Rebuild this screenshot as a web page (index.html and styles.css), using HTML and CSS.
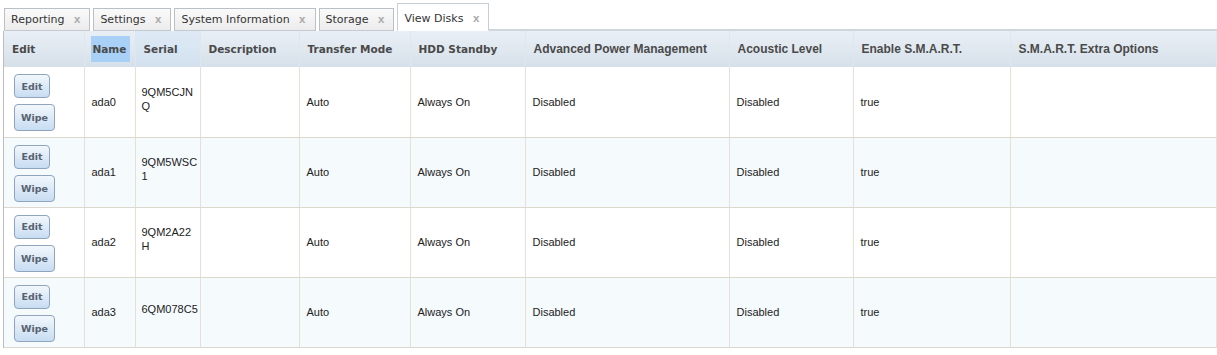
FILE: index.html
```html
<!DOCTYPE html>
<html lang="en">
<head>
    <meta charset="UTF-8">
    <title>View Disks</title>
    <link rel="stylesheet" href="styles.css">
</head>
<body>
    <!-- Tab strip -->
    <div class="tab-bar">
        <div class="tab">Reporting <span class="tab-close">x</span></div>
        <div class="tab">Settings <span class="tab-close">x</span></div>
        <div class="tab">System Information <span class="tab-close">x</span></div>
        <div class="tab">Storage <span class="tab-close">x</span></div>
        <div class="tab active">View Disks <span class="tab-close">x</span></div>
        <div class="tab-fill"></div>
    </div>

    <div class="grid-wrap">
        <table class="disk-grid">
            <colgroup>
                <col style="width:80px">
                <col style="width:51px">
                <col style="width:65px">
                <col style="width:99px">
                <col style="width:111px">
                <col style="width:115px">
                <col style="width:204px">
                <col style="width:124px">
                <col style="width:157px">
                <col>
            </colgroup>
            <thead>
                <tr>
                    <th class="th-plain">Edit</th>
                    <th class="th-plain sorted"><span>Name</span></th>
                    <th class="th-plain hover">Serial</th>
                    <th class="th-plain">Description</th>
                    <th class="th-plain">Transfer Mode</th>
                    <th class="th-plain">HDD Standby</th>
                    <th class="th-narrow">Advanced Power Management</th>
                    <th class="th-narrow">Acoustic Level</th>
                    <th class="th-narrow">Enable S.M.A.R.T.</th>
                    <th class="th-narrow">S.M.A.R.T. Extra Options</th>
                </tr>
            </thead>
            <tbody id="diskRows"></tbody>
        </table>
    </div>

    <script>
        // Disk data
        const disks = [
            { name: 'ada0', serial: '9QM5CJNQ' },
            { name: 'ada1', serial: '9QM5WSC1' },
            { name: 'ada2', serial: '9QM2A22H' },
            { name: 'ada3', serial: '6QM078C5' }
        ];

        const tbody = document.getElementById('diskRows');

        disks.forEach(function(d, i) {
            const tr = document.createElement('tr');
            if (i % 2 === 1) tr.className = 'alt';
            tr.innerHTML =
                '<td class="btn-cell"><button class="grid-btn">Edit</button><button class="grid-btn wide">Wipe</button></td>' +
                '<td>' + d.name + '</td>' +
                '<td class="serial">' + d.serial + '</td>' +
                '<td></td>' +
                '<td>Auto</td>' +
                '<td>Always On</td>' +
                '<td>Disabled</td>' +
                '<td>Disabled</td>' +
                '<td>true</td>' +
                '<td></td>';
            tbody.appendChild(tr);
        });
    </script>
</body>
</html>
```

FILE: styles.css
```css
* {
    margin: 0;
    padding: 0;
    box-sizing: border-box;
}

body {
    font-family: 'Liberation Sans', Arial, sans-serif;
    font-size: 11px;
    color: #222;
    background: #fff;
    padding-top: 3px;
}

/* Tabs */
.tab-bar {
    display: flex;
    align-items: flex-end;
    height: 28px;
    padding-left: 4px;
}

.tab {
    font-family: 'DejaVu Sans', Verdana, sans-serif;
    font-size: 11px;
    color: #333;
    height: 23px;
    line-height: 21px;
    padding: 0 9px 0 6px;
    margin-right: 3px;
    border: 1px solid #b9c0c8;
    border-bottom-color: #c3cad2;
    background: linear-gradient(#fafafa, #ececec);
    white-space: nowrap;
}

.tab.active {
    height: 28px;
    line-height: 28px;
    background: #fff;
    border-color: #c6ced8;
    border-bottom-color: #fff;
    margin-right: 0;
}

.tab-close {
    font-family: 'Liberation Sans', Arial, sans-serif;
    font-weight: bold;
    color: #a9a9a9;
    margin-left: 6px;
    font-size: 11.5px;
}

.tab-fill {
    flex: 1;
    border-bottom: 2px solid #d0d6dd;
    height: 2px;
}

/* Grid */
.grid-wrap {
    margin-left: 3px;
    border-left: 1px solid #bdbdbd;
}

.disk-grid {
    width: 100%;
    table-layout: fixed;
    border-collapse: collapse;
}

.disk-grid th {
    height: 36px;
    text-align: left;
    font-weight: bold;
    color: #4a4a4a;
    padding: 0 8px;
    background: linear-gradient(#e9eff5, #d6e0ea);
    border-right: 1px solid #dfe6ee;
    white-space: nowrap;
    overflow: hidden;
}

.disk-grid th.th-plain {
    font-family: 'DejaVu Sans', Verdana, sans-serif;
    font-size: 10.5px;
}

.disk-grid th.th-narrow {
    font-family: 'Liberation Sans Narrow', 'Liberation Sans', Arial, sans-serif;
    font-size: 12px;
    font-weight: bold;
}

.disk-grid th.hover {
    background: linear-gradient(#dde9f5, #d3e1ef);
}

.disk-grid th.sorted {
    padding: 0 5px 0 6px;
}

.disk-grid th.sorted span {
    display: block;
    background: #a9d0f6;
    height: 26px;
    line-height: 26px;
    padding-left: 2px;
}

.disk-grid td {
    height: 70px;
    padding: 0 8px 0 7px;
    border-right: 1px solid #e6e0d6;
    border-bottom: 1px solid #ddd8ce;
    vertical-align: middle;
}

.disk-grid tr.alt td {
    background: #f5fafd;
}

.disk-grid td.serial {
    word-break: break-all;
    line-height: 14px;
    padding: 0 1px 6px 6px;
}

.disk-grid td.btn-cell {
    padding: 0 0 0 10px;
}

.grid-btn {
    display: block;
    font-family: 'DejaVu Sans', Verdana, sans-serif;
    font-size: 9.5px;
    font-weight: bold;
    color: #56626f;
    width: 36px;
    height: 24px;
    margin: 2px 0 6px;
    border: 1px solid #8fa5bd;
    border-radius: 4px;
    background: linear-gradient(#f2f7fc, #c8dcf2);
}

.grid-btn.wide {
    width: 41px;
    height: 27px;
    margin-bottom: 0;
}
```
